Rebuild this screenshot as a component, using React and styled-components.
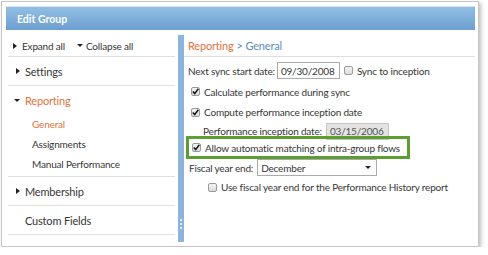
import React from 'react';
import styled, { createGlobalStyle } from 'styled-components';

const GlobalStyle = createGlobalStyle`
  body {
    margin: 0;
    background: #ffffff;
    font-family: Lato, "Open Sans", sans-serif;
    font-size: 10px;
    letter-spacing: -0.18px;
    color: #363636;
  }
`;

// Рамка окна

const Frame = styled.div`
  box-sizing: border-box;
  margin: 1px 0 0 1px;
  width: 478px;
  height: 246px;
  border: 1px solid #c6c6c6;
  box-shadow: 2px 2px 4px rgba(0, 0, 0, 0.25);
  padding: 4px 3px 3px 4px;
  display: flex;
  flex-direction: column;
`;

const Header = styled.div`
  height: 24px;
  box-sizing: border-box;
  border-top: 1px solid #d2e3f2;
  background: linear-gradient(#92bee3, #6c9fd0);
  color: #ffffff;
  font-weight: 700;
  font-size: 10.5px;
  letter-spacing: 0;
  padding-left: 11px;
  display: flex;
  align-items: center;
`;

const Body = styled.div`
  flex: 1;
  display: flex;
  padding-top: 5px;
`;

// Левая панель

const Sidebar = styled.div`
  width: 172px;
  box-sizing: border-box;
  padding: 0 3px 0 2px;
  display: flex;
  flex-direction: column;
`;

const Toolbar = styled.div`
  height: 21px;
  display: flex;
  align-items: center;
  padding-left: 5px;
  border-bottom: 1px solid #dedede;
`;

const ToolButton = styled.span`
  display: flex;
  align-items: center;
  gap: ${p => p.$gap || 5}px;
  margin-right: 12px;
`;

const Tri = styled.span`
  display: inline-block;
  width: 0;
  height: 0;
  ${p => p.$dir === 'down'
    ? `border-left: ${p.$s || 3}px solid transparent;
       border-right: ${p.$s || 3}px solid transparent;
       border-top: ${p.$s || 3}px solid #222;`
    : `border-top: ${p.$s || 3}px solid transparent;
       border-bottom: ${p.$s || 3}px solid transparent;
       border-left: ${(p.$s || 3) + 1}px solid #222;`}
`;

const Section = styled.div`
  border-bottom: 1px solid #dedede;
`;

const SectionHead = styled.div`
  height: 28px;
  display: flex;
  align-items: center;
  color: ${p => (p.$active ? '#e2733a' : '#363636')};
  font-size: 11px;
`;

const IconSlot = styled.span`
  width: 17px;
  box-sizing: border-box;
  padding-right: 5px;
  display: flex;
  justify-content: flex-end;
`;

const SubList = styled.div`
  padding-bottom: 2px;
`;

const SubItem = styled.div`
  height: 20px;
  display: flex;
  align-items: center;
  padding-left: 24px;
  color: ${p => (p.$active ? '#e2733a' : '#363636')};
`;

const Splitter = styled.div`
  width: 6px;
  margin-bottom: 1px;
  background: #8db4dc;
  display: flex;
  flex-direction: column;
  justify-content: flex-end;
  align-items: center;
  gap: 2px;
  padding-bottom: 13px;
  box-sizing: border-box;
`;

const Grip = styled.span`
  width: 2px;
  height: 2px;
  background: #e4eef8;
`;

// Правая панель

const Content = styled.div`
  flex: 1;
  display: flex;
  flex-direction: column;
`;

const Breadcrumb = styled.div`
  height: 21px;
  display: flex;
  align-items: center;
  padding-left: 4px;
  border-bottom: 1px solid #dedede;
  font-size: 11px;
  gap: 3px;
`;

const Crumb = styled.span`
  color: ${p => (p.$active ? '#e2733a' : '#5b8ac4')};
`;

const Form = styled.div`
  display: flex;
  flex-direction: column;
  padding: 3px 0 0 4px;
  white-space: nowrap;
`;

const Row = styled.div`
  height: ${p => p.$h || 20}px;
  display: flex;
  align-items: center;
  gap: ${p => (p.$gap != null ? p.$gap : 4)}px;
  padding-left: ${p => p.$indent || 0}px;
`;

const Highlight = styled.div`
  box-sizing: border-box;
  width: 224px;
  height: 23px;
  margin: -4px 0 -1px -2px;
  border: 3px solid #5c9e31;
  display: flex;
  align-items: center;
  gap: 4px;
  padding-left: 3px;
`;

const Box = styled.span`
  box-sizing: border-box;
  width: 9px;
  height: 9px;
  border: 1px solid #9a9a9a;
  border-radius: 2px;
  background: linear-gradient(#f4f4f4, #dcdcdc);
  display: inline-flex;
  align-items: center;
  justify-content: center;
  flex: none;
`;

const Field = styled.span`
  box-sizing: border-box;
  height: 17px;
  width: ${p => p.$w}px;
  margin-left: ${p => p.$ml || 0}px;
  border: 1px solid ${p => (p.$disabled ? '#c4c4c4' : '#ababab')};
  background: ${p => (p.$disabled ? '#e3e3e3' : '#ffffff')};
  display: flex;
  align-items: center;
  justify-content: space-between;
  padding: 0 5px 0 3px;
  color: ${p => (p.$disabled ? '#555' : '#363636')};
`;

const Check = ({ on }) => (
  <Box>
    {on && (
      <svg width="7" height="7" viewBox="0 0 7 7">
        <path d="M0.8 3.6 L2.7 5.6 L6.3 0.8" fill="none" stroke="#111" strokeWidth="1.5" />
      </svg>
    )}
  </Box>
);

const sections = [
  { title: 'Settings', icon: 'right' },
  {
    title: 'Reporting',
    icon: 'down',
    active: true,
    items: [
      { title: 'General', active: true },
      { title: 'Assignments' },
      { title: 'Manual Performance' },
    ],
  },
  { title: 'Membership', icon: 'right' },
  { title: 'Custom Fields' },
];

export default function App() {
  return (
    <>
      <GlobalStyle />
      <Frame>
        <Header>Edit Group</Header>
        <Body>
          <Sidebar>
            <Toolbar>
              <ToolButton>
                <Tri $dir="right" $s={3} />
                Expand all
              </ToolButton>
              <ToolButton $gap={3}>
                <Tri $dir="down" $s={3} />
                Collapse all
              </ToolButton>
            </Toolbar>
            {sections.map(s => (
              <Section key={s.title}>
                <SectionHead $active={s.active}>
                  <IconSlot>{s.icon && <Tri $dir={s.icon} $s={3} />}</IconSlot>
                  {s.title}
                </SectionHead>
                {s.items && (
                  <SubList>
                    {s.items.map(i => (
                      <SubItem key={i.title} $active={i.active}>{i.title}</SubItem>
                    ))}
                  </SubList>
                )}
              </Section>
            ))}
          </Sidebar>
          <Splitter>
            <Grip />
            <Grip />
            <Grip />
          </Splitter>
          <Content>
            <Breadcrumb>
              <Crumb $active>Reporting</Crumb>
              <Crumb>&gt; General</Crumb>
            </Breadcrumb>
            <Form>
              <Row $h={21}>
                Next sync start date:
                <Field $w={63} $ml={-2}>09/30/2008</Field>
                <Check />
                <span>Sync to inception</span>
              </Row>
              <Row $h={21} $indent={3}>
                <Check on />
                Calculate performance during sync
              </Row>
              <Row $h={20} $indent={3}>
                <Check on />
                Compute performance inception date
              </Row>
              <Row $h={18} $indent={15}>
                Performance inception date:
                <Field $w={63} $disabled>03/15/2006</Field>
              </Row>
              <Highlight>
                <Check on />
                Allow automatic matching of intra-group flows
              </Highlight>
              <Row $h={19} $indent={1}>
                Fiscal year end:
                <Field $w={120}>
                  December
                  <Tri $dir="down" $s={3} />
                </Field>
              </Row>
              <Row $h={20} $indent={20}>
                <Check />
                Use fiscal year end for the Performance History report
              </Row>
            </Form>
          </Content>
        </Body>
      </Frame>
    </>
  );
}
